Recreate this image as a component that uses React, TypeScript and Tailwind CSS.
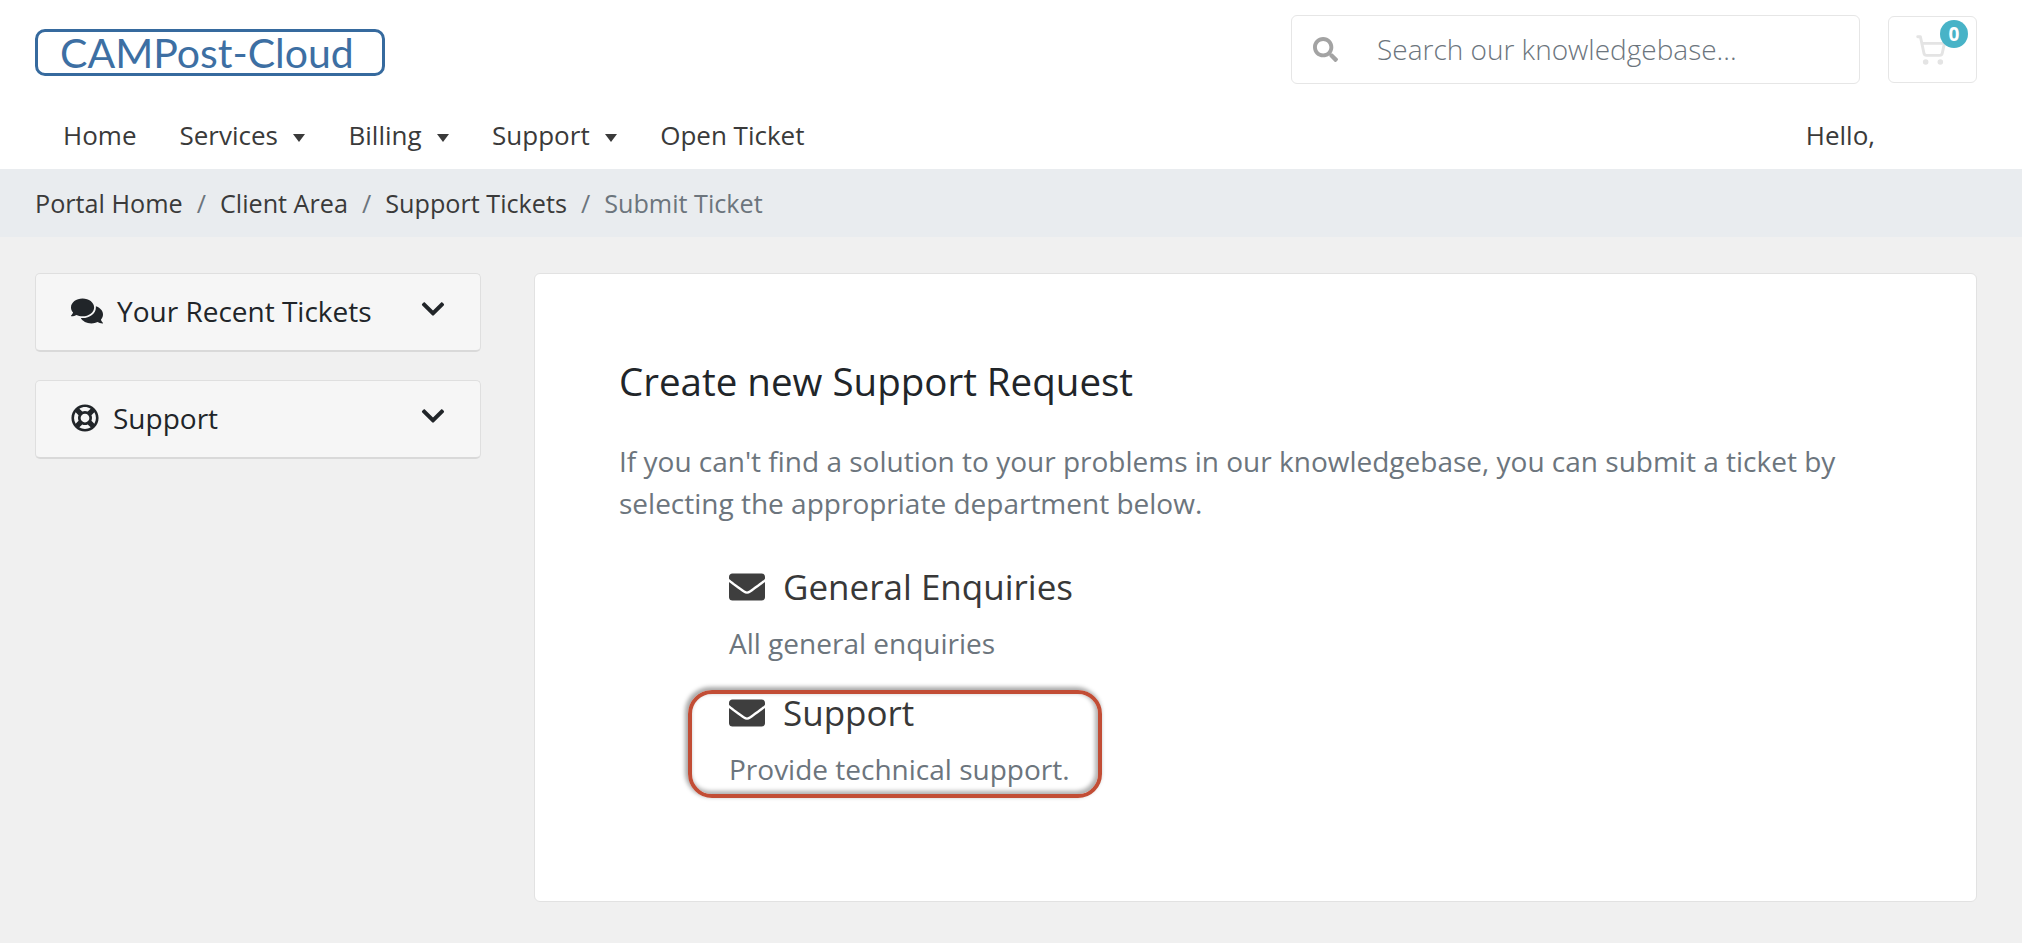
import { ShoppingCart } from "lucide-react";
import { FaChevronDown, FaComments, FaEnvelope, FaRegLifeRing, FaSearch } from "react-icons/fa";

const navItems = [
  { label: "Home", caret: false },
  { label: "Services", caret: true },
  { label: "Billing", caret: true },
  { label: "Support", caret: true },
  { label: "Open Ticket", caret: false },
];

const crumbs = ["Portal Home", "Client Area", "Support Tickets"];

const Caret = () => <span className="ml-[15.5px] inline-block border-x-[6.5px] border-t-[8px] border-x-transparent border-t-[#3a3a3a] align-[3px]" />;

const SidebarCard = ({ icon, label }: { icon: React.ReactNode; label: string }) => (
  <div className="flex h-[79px] items-center justify-between rounded-[5px] border border-[#dfdfdf] border-b-2 border-b-[#d9d9d9] bg-[#f6f6f6] pb-[2px] pl-[35px] pr-[34px] text-[#212529]">
    <div className="flex items-center gap-[14px] text-[28px]">
      {icon}
      <span>{label}</span>
    </div>
    <FaChevronDown size={26} className="-mt-[4px]" />
  </div>
);

const Department = ({ title, desc }: { title: string; desc: string }) => (
  <div className="ml-[110px]">
    <div className="flex h-[50px] items-center gap-[18px] text-[35px] text-[#383838]">
      <FaEnvelope size={36} className="text-[#3e3e3e]" />
      <span>{title}</span>
    </div>
    <p className="mt-[10px] text-[28px] leading-[42px] text-[#6c757d]">{desc}</p>
  </div>
);

export default function App() {
  return (
    <div className="min-h-[943px] bg-[#f0f0f0] font-['Open_Sans',sans-serif]">
      <header className="h-[169px] bg-white">
        <div className="flex items-start justify-between pl-[35px] pr-[45px] pt-[15px]">
          <div className="mt-[14px] flex h-[47px] w-[350px] items-center rounded-[10px] border-[3.5px] border-[#366a9e] pl-[22px] font-['Lato',sans-serif] text-[41px] leading-none text-[#3d6fa3]">
            CAMPost-Cloud
          </div>
          <div className="flex items-start gap-[28px]">
            <div className="flex h-[69px] w-[569px] items-center rounded-[6px] border border-[#e6e6e6] pl-[21px]">
              <FaSearch size={25} className="text-[#a3a3a3]" />
              <span className="ml-[39px] pb-[2px] text-[28px] font-light text-[#6c757d]">Search our knowledgebase...</span>
            </div>
            <div className="relative mt-px flex h-[67px] w-[89px] items-center justify-center rounded-[6px] border border-[#e6e6e6]">
              <ShoppingCart size={32} strokeWidth={2.2} className="mr-[3px] text-[#e4e4e4]" />
              <span className="absolute right-[8px] top-[3px] flex h-[28px] w-[28px] items-center justify-center rounded-full bg-[#48b3c7] text-[19px] font-bold text-white">0</span>
            </div>
          </div>
        </div>
        <nav className="mt-[32px] flex items-center justify-between pl-[63px] pr-[147px] text-[26px] text-[#3a3a3a]">
          <div className="flex items-center gap-[43px]">
            {navItems.map((item) => (
              <span key={item.label}>
                {item.label}
                {item.caret && <Caret />}
              </span>
            ))}
          </div>
          <span>Hello,</span>
        </nav>
      </header>

      <div className="flex h-[68px] items-center gap-[14px] bg-[#e9ecef] pl-[35px] pt-[2px] text-[25.2px] text-[#3a3a3a]">
        {crumbs.map((crumb) => (
          <div key={crumb} className="flex items-center gap-[14px]">
            <span>{crumb}</span>
            <span className="text-[#6c757d]">/</span>
          </div>
        ))}
        <span className="text-[#6c757d]">Submit Ticket</span>
      </div>

      <main className="flex items-start gap-[53px] pl-[35px] pr-[45px] pt-[36px]">
        <aside className="flex w-[446px] shrink-0 flex-col gap-[28px]">
          <SidebarCard icon={<FaComments size={32} />} label="Your Recent Tickets" />
          <SidebarCard icon={<FaRegLifeRing size={28} />} label="Support" />
        </aside>

        <section className="h-[629px] flex-1 rounded-[6px] border border-[#e2e2e2] bg-white pl-[84px] pr-[84px] pt-[80px]">
          <h3 className="text-[38.5px] leading-[54px] text-[#212529]">Create new Support Request</h3>
          <p className="mt-[32px] text-[28px] leading-[42px] text-[#6c757d]">
            If you can't find a solution to your problems in our knowledgebase, you can submit a ticket by selecting the appropriate department below.
          </p>
          <div className="mt-[38px] flex flex-col gap-[24px]">
            <Department title="General Enquiries" desc="All general enquiries" />
            <div className="relative">
              <Department title="Support" desc="Provide technical support." />
              <div className="absolute left-[69px] top-[2px] h-[108px] w-[414px] rounded-[24px] border-[4px] border-[#c24d35] shadow-[-2px_-2px_4px_1px_#a8a8a8,inset_-2px_-2px_4px_1px_#b0b0b0]" />
            </div>
          </div>
        </section>
      </main>
    </div>
  );
}
